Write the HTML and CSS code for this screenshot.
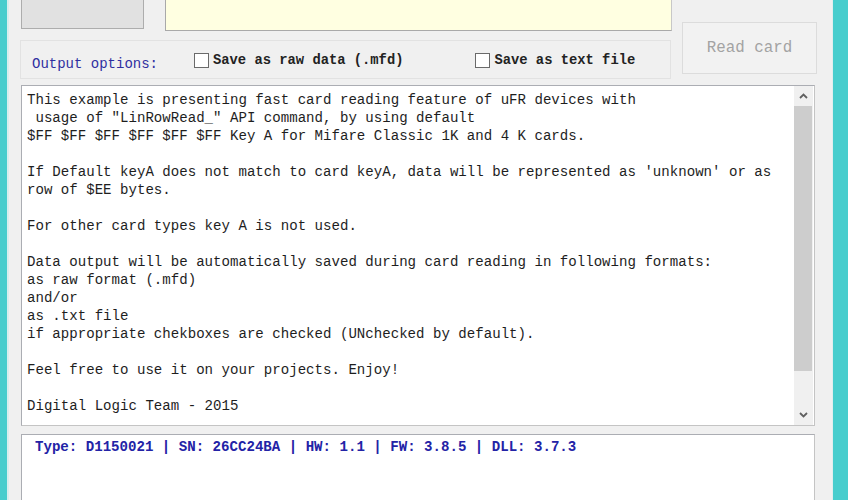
FILE: index.html
```html
<!DOCTYPE html>
<html lang="en">
<head>
    <meta charset="UTF-8">
    <title>uFR Fast Card Reading</title>
    <link rel="stylesheet" href="styles.css">
</head>
<body>
<div class="window">
    <div class="edge-left"></div>
    <div class="content">
        <div class="top-grid">
            <div class="left-col">
                <div class="top-row">
                    <button class="old-button" type="button"></button>
                    <div class="yellow-box"></div>
                </div>
                <div class="options">
                    <span class="options-title">Output options:</span>
                    <label class="check check-raw"><span class="box"></span>Save as raw data (.mfd)</label>
                    <label class="check check-txt"><span class="box"></span>Save as text file</label>
                </div>
            </div>
            <button class="read-card" type="button" disabled>Read card</button>
        </div>

        <div class="info-box">
<pre class="info-text">This example is presenting fast card reading feature of uFR devices with
 usage of "LinRowRead_" API command, by using default
$FF $FF $FF $FF $FF $FF Key A for Mifare Classic 1K and 4 K cards.

If Default keyA does not match to card keyA, data will be represented as 'unknown' or as
row of $EE bytes.

For other card types key A is not used.

Data output will be automatically saved during card reading in following formats:
as raw format (.mfd)
and/or
as .txt file
if appropriate chekboxes are checked (UNchecked by default).

Feel free to use it on your projects. Enjoy!

Digital Logic Team - 2015</pre>
            <div class="scrollbar">
                <div class="arrow">
                    <svg width="9" height="6" viewBox="0 0 9 6"><path d="M1 5 L4.5 1.5 L8 5" fill="none" stroke="#606060" stroke-width="1.8"/></svg>
                </div>
                <div class="thumb"></div>
                <div class="track"></div>
                <div class="arrow">
                    <svg width="9" height="6" viewBox="0 0 9 6"><path d="M1 1 L4.5 4.5 L8 1" fill="none" stroke="#606060" stroke-width="1.8"/></svg>
                </div>
            </div>
        </div>

        <div class="status-box">
            <span class="status-text">Type: D1150021 | SN: 26CC24BA | HW: 1.1 | FW: 3.8.5 | DLL: 3.7.3</span>
        </div>
    </div>
    <div class="edge-right"></div>
</div>
</body>
</html>
```

FILE: styles.css
```css
body {
    margin: 0;
    padding: 0;
    background-color: #f0f0f0;
    font-family: "Liberation Mono", "Courier New", monospace;
    overflow: hidden;
}
.window {
    display: flex;
    height: 500px;
}
.edge-left {
    width: 7px;
    background-color: #47cdcd;
    border-right: 2px solid #d8eeee;
    flex-shrink: 0;
}
.edge-right {
    width: 15px;
    background-color: #47cdcd;
    border-left: 1px solid #e0eeee;
    flex-shrink: 0;
}
.content {
    flex: 1;
    padding-left: 11px;
    padding-right: 15px;
    display: flex;
    flex-direction: column;
}
.top-grid {
    display: grid;
    grid-template-columns: 652px 135px;
    column-gap: 10px;
    flex-shrink: 0;
}
.top-row {
    display: flex;
    align-items: flex-start;
    height: 31px;
}
.old-button {
    margin-left: 1px;
    width: 123px;
    height: 29px;
    border: 1px solid #adadad;
    border-top: none;
    background-color: #e1e1e1;
    padding: 0;
}
.yellow-box {
    margin-left: 21px;
    width: 505px;
    height: 30px;
    background-color: #ffffe1;
    border: 1px solid #a9a9a9;
    border-top: none;
    border-right-color: #c8c8c8;
}
.options {
    margin-top: 9px;
    height: 35px;
    width: 649px;
    border: 1px solid #e2e2e2;
    display: flex;
    align-items: center;
    padding-top: 2px;
    box-sizing: content-box;
    font-size: 14px;
}
.options-title {
    margin-left: 11px;
    margin-top: 6px;
    color: #2f2fa0;
}
.check {
    display: flex;
    align-items: center;
    font-weight: bold;
    color: #222222;
    font-size: 13.8px;
}
.check-raw {
    margin-left: 36px;
}
.check-txt {
    margin-left: 72px;
}
.box {
    width: 13px;
    height: 13px;
    border: 1px solid #6a6a6a;
    background-color: #ffffff;
    margin-right: 4px;
}
.read-card {
    margin-top: 22px;
    height: 52px;
    width: 135px;
    border: 1px solid #dcdcdc;
    background-color: #f2f2f2;
    background-image: radial-gradient(#e6e6e6 0.6px, transparent 0.7px);
    background-size: 2px 2px;
    color: #a3a3a3;
    font-family: "Liberation Mono", "Courier New", monospace;
    font-size: 15.8px;
    padding: 0;
}
.info-box {
    margin-top: 6px;
    margin-left: 1px;
    height: 339px;
    width: 792px;
    flex-shrink: 0;
    background-color: #ffffff;
    border: 1px solid #abadb3;
    border-right-color: #c4c4c4;
    border-bottom-color: #c4c4c4;
    display: flex;
}
.info-text {
    flex: 1;
    margin: 0;
    padding: 5px 0 0 5px;
    font-family: "Liberation Mono", "Courier New", monospace;
    font-size: 14.1px;
    line-height: 18px;
    color: #1e1e1e;
    overflow: hidden;
}
.scrollbar {
    width: 19px;
    margin-right: 1px;
    background-color: #f0f0f0;
    display: flex;
    flex-direction: column;
}
.arrow {
    height: 20px;
    display: flex;
    align-items: center;
    justify-content: center;
}
.thumb {
    height: 265px;
    margin: 0 1px 0 0;
    background-color: #cdcdcd;
}
.track {
    flex: 1;
}
.status-box {
    margin-top: 8px;
    margin-left: 1px;
    width: 792px;
    flex: 1;
    background-color: #ffffff;
    border: 1px solid #abadb3;
    border-right-color: #c4c4c4;
    border-bottom: none;
}
.status-text {
    display: block;
    padding: 3px 0 0 13px;
    font-size: 14.1px;
    line-height: 18px;
    font-weight: bold;
    color: #2323a6;
}
```
